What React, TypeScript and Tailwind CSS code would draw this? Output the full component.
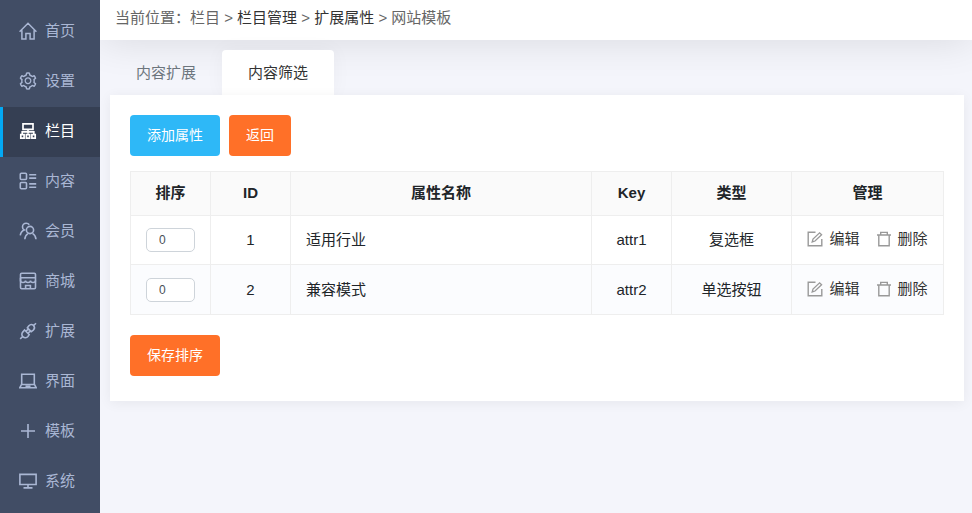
import React from 'react'
import { AiOutlineSetting } from 'react-icons/ai'

const iconProps = {
  width: 18,
  height: 18,
  viewBox: '0 0 18 18',
  fill: 'none',
  stroke: 'currentColor',
  strokeWidth: 1.6,
  'aria-hidden': true,
}

function HomeIcon() {
  return (
    <svg {...iconProps} strokeWidth={1.5}>
      <path d="M.6 9.8 9 1.3l8.4 8.500M2.900 8.200v8.900h4v-5.500h4.200v5.500h4V8.200" />
    </svg>
  )
}

function SitemapIcon() {
  return (
    <svg {...iconProps} strokeWidth={1.7}>
      <path d="M4 1.900h10v5.500H4zM9 7.400v4.300M3.200 12.200V9.900h11.600v2.300" />
      <path d="M1.800 12.700h3.300v3.400H1.800zM7.350 12.700h3.300v3.400h-3.300zM12.900 12.700h3.300v3.400h-3.300z" />
    </svg>
  )
}

function ContentIcon() {
  return (
    <svg {...iconProps}>
      <rect x="1.300" y="1.300" width="6.200" height="6.200" rx="1" />
      <rect x="1.300" y="10.500" width="6.200" height="6.200" rx="1" />
      <path d="M10.200 2.700h7M10.200 6.100h7M10.200 11.900h7M10.200 15.300h7" />
    </svg>
  )
}

function MemberIcon() {
  return (
    <svg {...iconProps}>
      <circle cx="11" cy="8" r="3.600" />
      <path d="M5.800 17.200c.200-2.600 1.300-4.600 3.200-5.600M17 17.200c-.200-2.600-1.400-4.600-3.500-5.800" />
      <path d="M10.300 2.800C9.500 1.700 8.400 1.300 7.200 1.300 5 1.300 3.500 2.900 3.500 4.900c0 1.300.600 2.400 1.700 3.100C2.900 9.100 1.500 10.900 1.300 13.400" />
    </svg>
  )
}

function ShopIcon() {
  return (
    <svg {...iconProps}>
      <rect x="1.500" y="1.200" width="15" height="15.600" rx="1.200" />
      <path d="M1.500 5.800h15M1.500 5.800v2.700c0 1.300 1 2 2.500 2s2.500-.700 2.500-2c0 1.300 1 2 2.500 2s2.500-.700 2.500-2c0 1.300 1 2 2.500 2s2.500-.700 2.500-2M6.600 16.800v-3.300h4.800v3.300" />
    </svg>
  )
}

function PlugIcon() {
  return (
    <svg {...iconProps}>
      <path d="m5.600 8 4.600 4.600-1.300 1.900a3.300 3.300 0 0 1-4.800.400 3.300 3.300 0 0 1-.400-4.800zM8.400 5.800l1.500-2.100a3.300 3.300 0 0 1 4.600-.200 3.300 3.300 0 0 1-.200 4.600l-2.100 1.500zM14.700 3.500l2.300-2.300M3.700 14.500l-2.500 2.300M7 9.300l2.200-2.200M9 11.300l2.200-2.200" />
    </svg>
  )
}

function LaptopIcon() {
  return (
    <svg {...iconProps}>
      <path d="M2.700 12.500V2.200h12.600v10.300M2.500 12.500h13l1.700 3.300H.800zM6.500 14.300h5" />
    </svg>
  )
}

function PlusIcon() {
  return (
    <svg {...iconProps}>
      <path d="M9 2v14M2 9h14" />
    </svg>
  )
}

function MonitorIcon() {
  return (
    <svg {...iconProps}>
      <path d="M.900 2.400h16.200v10.100H.900zM9 12.500v3.200M4.500 15.900h9" />
    </svg>
  )
}

function EditIcon() {
  return (
    <svg {...iconProps} width={16} height={16} viewBox="0 0 16 16" className="text-[#999]">
      <path d="M8.500 1.200H1.200v13.600h13.600V8" strokeWidth={1.4} />
      <path d="m5.200 10.900.800-2.900 6.600-6.200 2 2L8 10z" strokeWidth={1.300} />
    </svg>
  )
}

function TrashIcon() {
  return (
    <svg {...iconProps} width={16} height={16} viewBox="0 0 16 16" className="text-[#999]">
      <path d="M1 4h14M4.700 4V1.400h6.600V4M2.800 4v10.800h10.400V4" strokeWidth={1.4} />
    </svg>
  )
}

const menu = [
  { name: '首页', icon: <HomeIcon /> },
  { name: '设置', icon: <AiOutlineSetting size={20} className="-mx-px" /> },
  { name: '栏目', icon: <SitemapIcon />, active: true },
  { name: '内容', icon: <ContentIcon /> },
  { name: '会员', icon: <MemberIcon /> },
  { name: '商城', icon: <ShopIcon /> },
  { name: '扩展', icon: <PlugIcon /> },
  { name: '界面', icon: <LaptopIcon /> },
  { name: '模板', icon: <PlusIcon /> },
  { name: '系统', icon: <MonitorIcon /> },
]

const rows = [
  { id: 1, name: '适用行业', key: 'attr1', type: '复选框' },
  { id: 2, name: '兼容模式', key: 'attr2', type: '单选按钮' },
]

function Sidebar() {
  return (
    <nav className="w-[100px] shrink-0 bg-[#414d65] pt-[7px]">
      {menu.map((item) => (
        <a
          key={item.name}
          href="#"
          className={`flex h-[50px] items-center gap-2 border-l-3 pb-0.5 pl-4 ${
            item.active
              ? 'border-[#03a9f4] bg-[#353f53] text-white'
              : 'border-transparent text-[#aab7d4]'
          }`}
        >
          {item.icon}
          {item.name}
        </a>
      ))}
    </nav>
  )
}

function Breadcrumb() {
  return (
    <header className="h-10 bg-white px-[15px] pt-[6px] leading-6 text-[#666] shadow-[0_0_40px_rgba(0,0,0,0.12)]">
      当前位置：栏目 &gt;{' '}
      <a href="#" className="text-[#333]">
        栏目管理
      </a>{' '}
      &gt;{' '}
      <a href="#" className="text-[#333]">
        扩展属性
      </a>{' '}
      &gt; 网站模板
    </header>
  )
}

function AttrTable() {
  return (
    <table className="w-full table-fixed border-collapse text-center text-[#212529] [&_td]:border [&_td]:border-[#eee] [&_td]:px-[15px] [&_th]:border [&_th]:border-[#eee] [&_th]:pb-0.5">
      <thead>
        <tr className="h-11 bg-[#fafafa]">
          <th className="w-20">排序</th>
          <th className="w-20">ID</th>
          <th>属性名称</th>
          <th className="w-20">Key</th>
          <th className="w-[120px]">类型</th>
          <th className="w-[152px]">管理</th>
        </tr>
      </thead>
      <tbody>
        {rows.map((row) => (
          <tr key={row.id} className="h-[49px] last:h-[50px] even:bg-[#fbfcfe]">
            <td>
              <input
                type="text"
                aria-label={`${row.name} 排序`}
                defaultValue="0"
                className="block h-6 w-full rounded-[5px] border border-[#ced4da] bg-white px-3 text-xs text-[#495057]"
              />
            </td>
            <td>{row.id}</td>
            <td className="text-left">{row.name}</td>
            <td>{row.key}</td>
            <td>{row.type}</td>
            <td className="pb-0.5">
              <div className="flex justify-center gap-4 whitespace-nowrap text-[#333]">
                <a href="#" className="flex items-center gap-[6px]">
                  <EditIcon />
                  编辑
                </a>
                <a href="#" className="flex items-center gap-[6px]">
                  <TrashIcon />
                  删除
                </a>
              </div>
            </td>
          </tr>
        ))}
      </tbody>
    </table>
  )
}

export default function App() {
  return (
    <div className="flex min-h-screen bg-[#f4f5fb] font-['Liberation_Sans','Noto_Sans_CJK_SC',sans-serif] text-[15px] leading-[22px]">
      <Sidebar />
      <div className="min-w-0 flex-1 overflow-hidden">
        <Breadcrumb />
        <main className="pt-[10px] pr-2 pb-5 pl-[10px]">
          <div role="tablist" className="flex">
            <button role="tab" aria-selected="false" className="h-[45px] px-[26px] text-[#6c757d]">
              内容扩展
            </button>
            <button
              role="tab"
              aria-selected="true"
              className="h-[45px] rounded-t bg-white px-[26px] text-[#333] shadow-[0_0_20px_rgba(0,0,0,0.04)]"
            >
              内容筛选
            </button>
          </div>
          <form className="relative bg-white px-5 pt-5 pb-[25px] shadow-[0_2px_12px_rgba(0,0,0,0.06)]">
            <div className="mb-[15px] flex gap-[9px] text-sm text-white">
              <button type="button" className="h-[41px] rounded bg-[#2eb8f7] px-[17px] pb-0.5">
                添加属性
              </button>
              <button type="button" className="h-[41px] rounded bg-[#ff7028] px-[17px] pb-0.5">
                返回
              </button>
            </div>
            <AttrTable />
            <button
              type="button"
              className="mt-5 h-[41px] rounded bg-[#ff7028] px-[17px] pb-0.5 text-sm text-white"
            >
              保存排序
            </button>
          </form>
        </main>
      </div>
    </div>
  )
}
